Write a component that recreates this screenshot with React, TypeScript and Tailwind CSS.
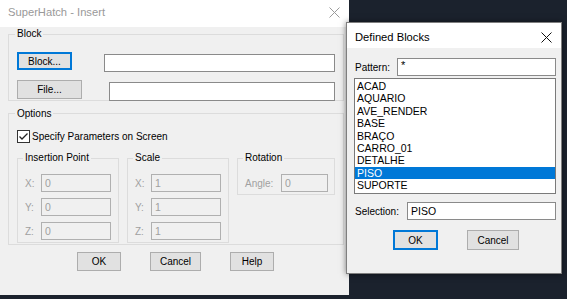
import React from 'react';

const font = { fontFamily: '"Liberation Sans", Arial, sans-serif' };

function Btn({ label, w, h = 19, focused = false }: { label: string; w: number; h?: number; focused?: boolean }) {
  return (
    <div
      className={`flex items-center justify-center bg-[#e1e1e1] text-[10px] text-black ${focused ? 'border-2 border-[#0078d7]' : 'border border-[#adadad]'}`}
      style={{ width: w, height: h }}
    >
      {label}
    </div>
  );
}

function Field({ value = '', w, h = 18, disabled = false }: { value?: string; w: number; h?: number; disabled?: boolean }) {
  return (
    <div
      className={`flex items-center pl-[3px] text-[10.5px] leading-none ${disabled ? 'border border-[#b0b0b0] bg-[#f0f0f0] text-[#a0a0a0]' : 'border border-[#8a8a8a] bg-white text-black'}`}
      style={{ width: w, height: h }}
    >
      {value}
    </div>
  );
}

function CoordGroup({ title, value }: { title: string; value: string }) {
  return (
    <fieldset className="h-[91px] w-[102px] border border-[#dcdcdc]">
      <legend className="ml-[5px] px-[2px] text-[10px] leading-[12px] text-black">{title}</legend>
      <div className="mt-[10px] flex flex-col gap-[6px] pl-[7px]">
        {['X:', 'Y:', 'Z:'].map((axis) => (
          <div key={axis} className="flex items-center">
            <span className="w-[16px] text-[10px] text-[#a0a0a0]">{axis}</span>
            <Field value={value} w={70} disabled />
          </div>
        ))}
      </div>
    </fieldset>
  );
}

function CloseIcon({ color }: { color: string }) {
  return (
    <svg width="11" height="11" viewBox="0 0 11 11">
      <path d="M0.5 0.5L10.5 10.5M10.5 0.5L0.5 10.5" stroke={color} strokeWidth="1" />
    </svg>
  );
}

const blocks = ['ACAD', 'AQUARIO', 'AVE_RENDER', 'BASE', 'BRAÇO', 'CARRO_01', 'DETALHE', 'PISO', 'SUPORTE'];

export default function App() {
  return (
    <div className="relative h-[299px] w-[567px] overflow-hidden bg-[#1b222d]" style={font}>
      {/* SuperHatch - Insert */}
      <div className="flex h-[295px] w-[349px] flex-col bg-[#f0f0f0]">
        <div className="flex h-[27px] items-center justify-between bg-white pb-[2px] pl-[8px] pr-[9px]">
          <span className="text-[11.2px] text-[#999999]">SuperHatch - Insert</span>
          <CloseIcon color="#9a9a9a" />
        </div>

        <fieldset className="ml-[8px] h-[74px] w-[336px] border border-[#dcdcdc]">
          <legend className="ml-[6px] px-[2px] text-[10px] leading-[14px] text-black">Block</legend>
          <div className="mt-[11px] flex items-start pl-[8px]">
            <Btn label="Block..." w={55} h={18} focused />
            <div className="ml-[32px] mt-[2px]">
              <Field w={231} h={18} />
            </div>
          </div>
          <div className="mt-[8px] flex items-start pl-[8px]">
            <Btn label="File..." w={65} />
            <div className="ml-[27px] mt-[2px]">
              <Field w={226} h={19} />
            </div>
          </div>
        </fieldset>

        <fieldset className="ml-[8px] mt-[6px] h-[138px] w-[336px] border border-[#dcdcdc]">
          <legend className="ml-[6px] px-[2px] text-[10px] leading-[13px] text-black">Options</legend>
          <div className="mt-[9px] flex items-center pl-[8px]">
            <svg width="13" height="13" viewBox="0 0 13 13">
              <rect x="0.5" y="0.5" width="12" height="12" fill="#ffffff" stroke="#333333" />
              <path d="M2.5 6.5L5 9L10.5 3.5" fill="none" stroke="#222222" strokeWidth="1.3" />
            </svg>
            <span className="ml-[2px] text-[10px] text-black">Specify Parameters on Screen</span>
          </div>
          <div className="mt-[8px] flex items-start gap-[8px] pl-[8px]">
            <CoordGroup title="Insertion Point" value="0" />
            <CoordGroup title="Scale" value="1" />
            <fieldset className="h-[43px] w-[98px] border border-[#dcdcdc]">
              <legend className="ml-[5px] px-[2px] text-[10px] leading-[12px] text-black">Rotation</legend>
              <div className="mt-[10px] flex items-center pl-[7px]">
                <span className="w-[36px] text-[10px] text-[#a0a0a0]">Angle:</span>
                <Field value="0" w={47} disabled />
              </div>
            </fieldset>
          </div>
        </fieldset>

        <div className="ml-[77px] mt-[7px] flex gap-[29px]">
          <Btn label="OK" w={44} />
          <Btn label="Cancel" w={51} />
          <Btn label="Help" w={44} />
        </div>
      </div>

      {/* Defined Blocks */}
      <div className="absolute left-[346px] top-[22px] flex h-[252px] w-[216px] flex-col border border-[#7f7f7f] bg-[#f0f0f0] shadow-[0_0_6px_rgba(0,0,0,0.5)]">
        <div className="flex h-[25px] items-center justify-between bg-white pl-[8px] pr-[9px] pt-[3px]">
          <span className="text-[11.2px] text-black">Defined Blocks</span>
          <CloseIcon color="#111111" />
        </div>
        <div className="flex flex-col pl-[7px] pr-[5px]">
          <div className="mt-[10px] flex items-center justify-between">
            <span className="ml-[1px] text-[10px] text-black">Pattern:</span>
            <div className="flex h-[18px] w-[159px] items-start border border-[#8a8a8a] bg-white pl-[3px] pt-[1px] text-[11px] leading-[11px] text-black">*</div>
          </div>
          <div className="mt-[2px] h-[116px] w-[202px] border border-[#7a7a7a] bg-white pt-[1px]">
            {blocks.map((b) => (
              <div
                key={b}
                className={`h-[12.4px] pl-[2px] text-[10.5px] leading-[12.4px] ${b === 'PISO' ? 'bg-[#0078d7] text-white' : 'text-black'}`}
              >
                {b}
              </div>
            ))}
          </div>
          <div className="mt-[8px] flex items-center justify-between">
            <span className="ml-[1px] text-[10px] text-black">Selection:</span>
            <Field value="PISO" w={149} />
          </div>
          <div className="ml-[39px] mt-[10px] flex gap-[29px]">
            <Btn label="OK" w={45} h={20} focused />
            <Btn label="Cancel" w={52} h={20} />
          </div>
        </div>
      </div>
    </div>
  );
}
